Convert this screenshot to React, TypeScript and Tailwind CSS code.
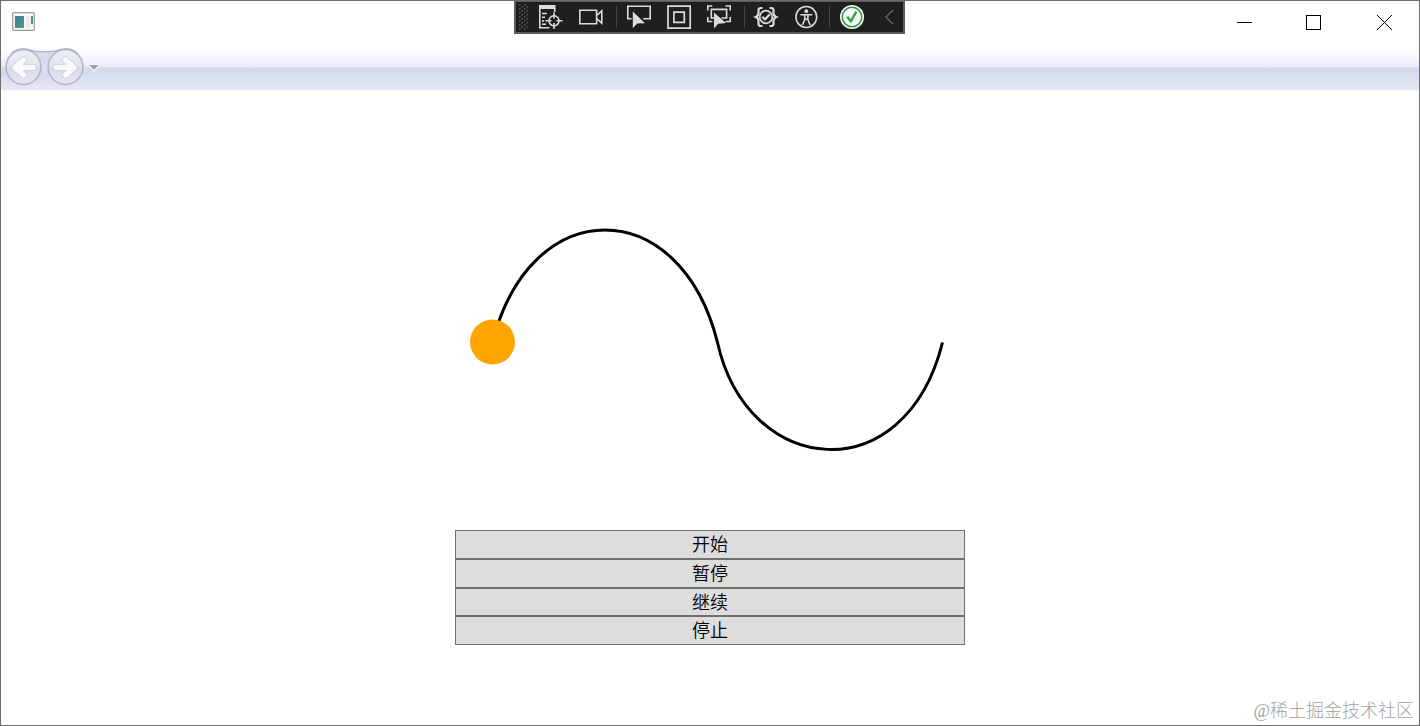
import type { ReactNode } from 'react';

const BUTTONS = [
  { label: '开始', height: 'h-[29px]' },
  { label: '暂停', height: 'h-[29px]' },
  { label: '继续', height: 'h-[28px]' },
  { label: '停止', height: 'h-[29px]' },
];

function ToolButton({ label, children }: { label: string; children: ReactNode }) {
  return (
    <button type="button" aria-label={label} className="flex h-full w-10 shrink-0 items-center justify-center">
      <svg width="24" height="24" viewBox="0 0 24 24" fill="none" stroke="#dcdcdc" strokeWidth="1.6" className="overflow-visible">
        {children}
      </svg>
    </button>
  );
}

function Grip() {
  const dots = [];
  for (let row = 0; row < 7; row++) {
    for (let col = 0; col < 2; col++) {
      dots.push(<rect key={`${row}-${col}`} x={col * 5} y={row * 4} width="1.5" height="1.5" />);
      if (row < 6) dots.push(<rect key={`m${row}-${col}`} x={col * 5 + 2.5} y={row * 4 + 2} width="1.5" height="1.5" />);
    }
  }
  return (
    <div className="flex w-[15px] shrink-0 justify-center">
      <svg width="9" height="26" fill="#5c5c5c">
        {dots}
      </svg>
    </div>
  );
}

function DebugToolbar() {
  return (
    <div className="absolute top-0 left-[514px] flex h-[34px] w-[391px] items-center border-2 border-[#5c5c5c] bg-[#1f1f1f]">
      <Grip />
      <ToolButton label="Live visual tree">
        <rect x="0" y="0" width="16.5" height="4" fill="#dcdcdc" stroke="none" />
        <path d="M.8 2v20.7h9.7M15.7 3v4M3 8.5h5M3 12.3h3M3 16h2M3 19.2h4" />
        <circle cx="15" cy="15.8" r="5" />
        <path d="M15 7.5v6M15 18v6M6.5 15.8h6M17.5 15.8h6" />
      </ToolButton>
      <ToolButton label="Record">
        <path d="M.8 5.3h16.8v13.4H.8zM17.6 10.5l5.2-4.6v12.2l-5.2-4.6" />
      </ToolButton>
      <div className="flex w-2 justify-end pr-0.5">
        <span className="h-[22px] w-px bg-[#464646]" />
      </div>
      <ToolButton label="Select element">
        <path d="M4.5 13.7H.8V1.2h22.4v12.5h-7" />
        <path d="M5.8 6.5v16.7l4.4-4.6 7.8-.4z" fill="#dcdcdc" stroke="none" />
      </ToolButton>
      <ToolButton label="Layout adorners">
        <path d="M1 1.1h22.2v22H1zM6.9 7.1h10.4v10.2H6.9z" strokeWidth="1.7" />
      </ToolButton>
      <ToolButton label="Track focused element">
        <path d="M.8 5.5V1h4.5M18.5 1h4.7v4.5M.8 12v4.5h4.5M18.5 16.5h4.7V12" />
        <path d="M7 13H4.3V4.4h15.3V13h-5" />
        <path d="M7 7.5v16l4.2-4.8 7.8-.7z" fill="#dcdcdc" stroke="none" />
      </ToolButton>
      <div className="flex w-[7px] justify-center">
        <span className="h-[22px] w-px translate-x-[2px] bg-[#464646]" />
      </div>
      <ToolButton label="Binding failures">
        <path
          d="M8.5 3H6.8Q4.5 3 4.5 5.3v3Q4.5 10.8 1.8 12q2.7 1.2 2.7 3.7v3Q4.5 21 6.8 21h1.7M15.5 3h1.7q2.3 0 2.3 2.3v3q0 2.5 2.7 3.7-2.7 1.2-2.7 3.7v3q0 2.3-2.3 2.3h-1.7"
          strokeWidth="2.2"
        />
        <circle cx="12" cy="12" r="6.3" strokeWidth="1.7" />
        <path d="M8.3 11.8l2.7 2.7 4.8-5.3" strokeWidth="2.1" />
      </ToolButton>
      <ToolButton label="Accessibility">
        <circle cx="12.3" cy="12" r="10.4" strokeWidth="1.5" />
        <circle cx="12.3" cy="6.2" r="1.9" fill="#dcdcdc" stroke="none" />
        <path d="M6.3 9.7h12M10.7 10v4.7L8.5 20M13.9 10v4.7l2.2 5.3M10.7 14.3h3.2" />
      </ToolButton>
      <div className="flex w-1.5 justify-center">
        <span className="h-[22px] w-px bg-[#464646]" />
      </div>
      <ToolButton label="Hot reload">
        <circle cx="12" cy="12" r="12" fill="#f5f8f5" stroke="none" />
        <circle cx="12" cy="12" r="9.7" stroke="#329b42" strokeWidth="1.5" />
        <path d="M7.2 11.7l3.7 4.5L16.4 6.6" stroke="#329b42" strokeWidth="2.3" />
      </ToolButton>
      <svg width="9" height="16" viewBox="0 0 9 16" fill="none" stroke="#686868" strokeWidth="1.2" className="ml-[13px]">
        <path d="M8 1L1 8l7 7" />
      </svg>
    </div>
  );
}

function TitleBar() {
  return (
    <header className="flex h-[45px] shrink-0 justify-between">
      <svg width="24" height="20" className="mt-[11px] ml-[11px]">
        <defs>
          <linearGradient id="pane" x1="0" y1="0" x2="1" y2="1">
            <stop offset="0" stopColor="#4777a0" />
            <stop offset="1" stopColor="#49a477" />
          </linearGradient>
        </defs>
        <rect x=".7" y=".7" width="21.6" height="17.6" rx="1" fill="#f7f7f7" stroke="#9b9b9b" strokeWidth="1.2" />
        <rect x="3" y="4" width="9" height="12" fill="url(#pane)" />
        <rect x="14" y="4" width="4" height="12" fill="#eaeaea" />
        <rect x="19" y="4" width="2" height="8" fill="url(#pane)" />
      </svg>
      <div className="mr-[26px] flex h-[43px] items-center">
        <svg width="16" height="16" fill="none" stroke="#000" shapeRendering="crispEdges">
          <path d="M0 7.5h15" />
        </svg>
        <svg width="16" height="16" fill="none" stroke="#000" shapeRendering="crispEdges" className="ml-[53px]">
          <path d="M.5.5h14v14H.5z" />
        </svg>
        <svg width="16" height="16" fill="none" stroke="#000" className="ml-[55px]">
          <path d="M0 0l15 15M15 0L0 15" />
        </svg>
      </div>
    </header>
  );
}

function NavArrow({ d }: { d: string }) {
  return (
    <g strokeLinecap="round" strokeLinejoin="round">
      <path d={d} stroke="#c9ccda" strokeWidth="7" />
      <path d={d} stroke="#fafafc" strokeWidth="5.6" />
    </g>
  );
}

function NavigationBar() {
  return (
    <nav className="flex h-11 shrink-0 bg-[linear-gradient(to_bottom,#ffffff_0px,#f9fafe_8px,#e7ecf8_21px,#d1d7e8_22px,#d8deed_30px,#e4e8f6_43px,#e6e9f7_44px)]">
      <svg width="102" height="44" fill="none">
        <defs>
          <linearGradient id="disc" x1="0" y1="0" x2="0" y2="1">
            <stop offset="0" stopColor="#eef0f6" />
            <stop offset=".48" stopColor="#e2e4ed" />
            <stop offset=".52" stopColor="#d8dbe6" />
            <stop offset="1" stopColor="#e7e9f1" />
          </linearGradient>
        </defs>
        <path
          d="M22.5 2.5C31 2.5 32 6 43.5 6S56 2.5 64.5 2.5a18.5 18.5 0 0 1 0 37C56 39.5 52 33 43.5 33S31 39.5 22.5 39.5a18.5 18.5 0 0 1 0-37z"
          fill="#d8ddec"
        />
        <circle cx="22.5" cy="21" r="17.4" fill="url(#disc)" stroke="#b3b6c8" strokeWidth="1.5" />
        <circle cx="64.5" cy="21" r="17.4" fill="url(#disc)" stroke="#b3b6c8" strokeWidth="1.5" />
        <path
          d="M10.5 7.5C15 2.5 23 1.5 30 4.4 34 6.2 53 6.2 57 4.4 64 1.5 72 2.5 76.5 7.5"
          stroke="#a9b1d3"
          strokeWidth="1.2"
        />
        <NavArrow d="M22.5 14L14 21.5l8.5 7.5M15 21.5h17" />
        <NavArrow d="M64.5 14l8.5 7.5-8.5 7.5M72 21.5H55" />
        <path d="M85.5 17.5h15l-7.5 8.5z" fill="#f9faff" />
        <path d="M88 19h10l-5 5z" fill="#9fa1ac" />
      </svg>
    </nav>
  );
}

function MotionPath() {
  return (
    <svg width="510" height="300" fill="none">
      <path
        d="M37.5 152.5C75 2.5 225 2.5 262.5 152.5C292.5 287.5 450 302.5 487.5 152.5"
        stroke="#000"
        strokeWidth="3"
      />
      <circle cx="37.5" cy="152" r="22.5" fill="#ffa500" />
    </svg>
  );
}

export default function App() {
  return (
    <div className="relative flex h-[726px] w-[1420px] flex-col overflow-hidden border border-[#6c6c6c] bg-white font-['Liberation_Sans','Noto_Sans_CJK_SC',sans-serif] text-black">
      <TitleBar />
      <NavigationBar />
      <main className="flex flex-1 flex-col items-center pt-[100px]">
        <MotionPath />
        <div className="mt-10 flex w-[510px] flex-col">
          {BUTTONS.map((b) => (
            <button
              key={b.label}
              type="button"
              className={`${b.height} flex items-center justify-center border border-[#707070] bg-[#dddddd] pt-px text-[18px] leading-none font-[350]`}
            >
              {b.label}
            </button>
          ))}
        </div>
        <footer className="mt-[54px] mr-[5px] self-end font-['Liberation_Serif','Noto_Sans_CJK_SC',serif] text-[18px] leading-6 font-light whitespace-nowrap text-[#a3a3a3]">
          @稀土掘金技术社区
        </footer>
      </main>
      {/* sits half over the window frame */}
      <div className="absolute -top-px -left-px">
        <DebugToolbar />
      </div>
    </div>
  );
}
